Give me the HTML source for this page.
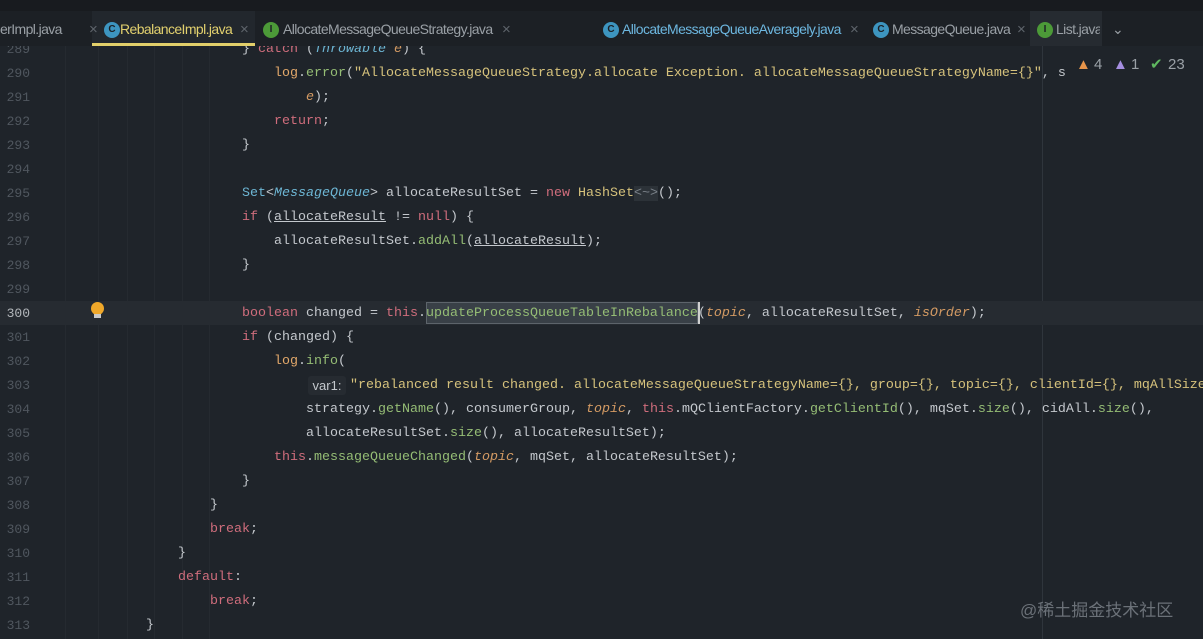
<!DOCTYPE html>
<html><head><meta charset="utf-8"><style>
body{margin:0;width:1203px;height:639px;overflow:hidden;background:#1f242a;position:relative;font-family:"Liberation Mono",monospace}
.ln{position:absolute;left:0;width:30px;text-align:right;font-size:13px;color:#50575f;height:24px;line-height:24px;margin-top:2px}
.c{position:absolute;font-size:13.33px;white-space:pre;color:#c4c8cd;height:24px;line-height:24px;margin-top:2px}
.k{color:#cf6d7c}.s{color:#d6c27c}.m{color:#95bd75}.f{color:#e2a86a}.p{color:#d39a63;font-style:italic}.t{color:#6db6d4}.ti{color:#6db6d4;font-style:italic}.g{color:#7b828a}
.guide{position:absolute;top:45px;bottom:0;width:1px;background:#252a30}
.tabs{position:absolute;left:0;top:0;width:1203px;height:46px;background:#1c2025;font-family:"Liberation Sans",sans-serif;font-size:14px;letter-spacing:-0.6px}
.tab{position:absolute;top:21px;color:#9aa0a6;white-space:nowrap}
.ic{position:absolute;top:22px;width:16px;height:16px;border-radius:50%;font-size:10px;line-height:16px;text-align:center;color:#1c2025;font-weight:bold;letter-spacing:0}
.x{position:absolute;top:21px;color:#5f656c;font-size:15px}
</style></head><body>
<div class="guide" style="left:65px"></div><div class="guide" style="left:98px"></div><div class="guide" style="left:127px"></div><div class="guide" style="left:154px"></div><div class="guide" style="left:182px"></div><div class="guide" style="left:209px"></div>
<div style="position:absolute;left:1042px;top:46px;bottom:0;width:1px;background:#2f353c"></div>
<div style="position:absolute;left:0;top:301px;width:1203px;height:24px;background:#262b31"></div>

<div class="ln" style="top:36px">289</div><div class="c" style="top:36px;left:242px">} <span class="k">catch</span> (<span class="ti">Throwable</span> <span class="p">e</span>) {</div>
<div class="ln" style="top:60px">290</div><div class="c" style="top:60px;left:274px"><span class="f">log</span>.<span class="m">error</span>(<span class="s">"AllocateMessageQueueStrategy.allocate Exception. allocateMessageQueueStrategyName={}"</span>, s</div>
<div class="ln" style="top:84px">291</div><div class="c" style="top:84px;left:306px"><span class="p">e</span>);</div>
<div class="ln" style="top:108px">292</div><div class="c" style="top:108px;left:274px"><span class="k">return</span>;</div>
<div class="ln" style="top:132px">293</div><div class="c" style="top:132px;left:242px">}</div>
<div class="ln" style="top:156px">294</div>
<div class="ln" style="top:180px">295</div><div class="c" style="top:180px;left:242px"><span class="t">Set</span>&lt;<span class="ti">MessageQueue</span>&gt; allocateResultSet = <span class="k">new</span> <span class="s">HashSet</span><span class="g" style="background:#2c3238">&lt;~&gt;</span>();</div>
<div class="ln" style="top:204px">296</div><div class="c" style="top:204px;left:242px"><span class="k">if</span> (<u>allocateResult</u> != <span class="k">null</span>) {</div>
<div class="ln" style="top:228px">297</div><div class="c" style="top:228px;left:274px">allocateResultSet.<span class="m">addAll</span>(<u>allocateResult</u>);</div>
<div class="ln" style="top:252px">298</div><div class="c" style="top:252px;left:242px">}</div>
<div class="ln" style="top:276px">299</div>
<div class="ln" style="top:300px;color:#b3b7bb">300</div>
<div style="position:absolute;left:91px;top:302px;width:13px;height:13px;border-radius:50%;background:#f0a82a"></div>
<div style="position:absolute;left:94px;top:314px;width:7px;height:4px;background:#c9c9c9"></div>
<div style="position:absolute;left:426px;top:302px;width:272px;height:22px;background:#394047;border:1px solid #5d646b;box-sizing:border-box"></div>
<div style="position:absolute;left:698px;top:302px;width:2px;height:22px;background:#d0d0d0"></div>
<div class="c" style="top:300px;left:242px"><span class="k">boolean</span> changed = <span class="k">this</span>.<span class="m">updateProcessQueueTableInRebalance</span>(<span class="p">topic</span>, allocateResultSet, <span class="p">isOrder</span>);</div>
<div class="ln" style="top:324px">301</div><div class="c" style="top:324px;left:242px"><span class="k">if</span> (changed) {</div>
<div class="ln" style="top:348px">302</div><div class="c" style="top:348px;left:274px"><span class="f">log</span>.<span class="m">info</span>(</div>
<div class="ln" style="top:372px">303</div>
<div style="position:absolute;left:308px;top:376px;width:38px;height:19px;background:#262b31;border-radius:3px;font-family:'Liberation Sans',sans-serif;font-size:13px;color:#c4c8cd;line-height:19px;text-align:center">var1:</div>
<div class="c" style="top:372px;left:350px"><span class="s">"rebalanced result changed. allocateMessageQueueStrategyName={}, group={}, topic={}, clientId={}, mqAllSize</span></div>
<div class="ln" style="top:396px">304</div><div class="c" style="top:396px;left:306px">strategy.<span class="m">getName</span>(), consumerGroup, <span class="p">topic</span>, <span class="k">this</span>.mQClientFactory.<span class="m">getClientId</span>(), mqSet.<span class="m">size</span>(), cidAll.<span class="m">size</span>(),</div>
<div class="ln" style="top:420px">305</div><div class="c" style="top:420px;left:306px">allocateResultSet.<span class="m">size</span>(), allocateResultSet);</div>
<div class="ln" style="top:444px">306</div><div class="c" style="top:444px;left:274px"><span class="k">this</span>.<span class="m">messageQueueChanged</span>(<span class="p">topic</span>, mqSet, allocateResultSet);</div>
<div class="ln" style="top:468px">307</div><div class="c" style="top:468px;left:242px">}</div>
<div class="ln" style="top:492px">308</div><div class="c" style="top:492px;left:210px">}</div>
<div class="ln" style="top:516px">309</div><div class="c" style="top:516px;left:210px"><span class="k">break</span>;</div>
<div class="ln" style="top:540px">310</div><div class="c" style="top:540px;left:178px">}</div>
<div class="ln" style="top:564px">311</div><div class="c" style="top:564px;left:178px"><span class="k">default</span>:</div>
<div class="ln" style="top:588px">312</div><div class="c" style="top:588px;left:210px"><span class="k">break</span>;</div>
<div class="ln" style="top:612px">313</div><div class="c" style="top:612px;left:146px">}</div>

<div style="position:absolute;left:1070px;top:52px;width:133px;height:26px;background:#1f242a;font-family:'Liberation Sans',sans-serif;font-size:15px;line-height:26px;color:#9aa0a6">
<span style="position:absolute;left:6px;color:#e8954a">▲</span><span style="position:absolute;left:24px">4</span>
<span style="position:absolute;left:43px;color:#a58ee0">▲</span><span style="position:absolute;left:61px">1</span>
<span style="position:absolute;left:80px;color:#5fb860">✔</span><span style="position:absolute;left:98px">23</span></div>

<div style="position:absolute;left:1020px;top:596px;font-family:'Liberation Sans','Noto Sans CJK SC',sans-serif;font-size:17px;color:#6b7178">@稀土掘金技术社区</div>

<div class="tabs">
<div style="position:absolute;left:0;top:0;width:1203px;height:11px;background:#181b1f"></div>
<div style="position:absolute;left:92px;top:11px;width:163px;height:35px;background:#22272d"></div>
<div style="position:absolute;left:92px;top:43px;width:163px;height:3px;background:#e2cf6a"></div>
<div style="position:absolute;left:1030px;top:11px;width:72px;height:35px;background:#262b31"></div>
<div class="tab" style="left:0">erImpl.java</div><div class="x" style="left:89px">×</div>
<div class="ic" style="left:104px;background:#3d95c0">C</div>
<div class="tab" style="left:120px;color:#e2d06e">RebalanceImpl.java</div><div class="x" style="left:240px">×</div>
<div class="ic" style="left:263px;background:#4c9a38">I</div>
<div class="tab" style="left:283px">AllocateMessageQueueStrategy.java</div><div class="x" style="left:502px">×</div>
<div class="ic" style="left:603px;background:#3d95c0">C</div>
<div class="tab" style="left:622px;color:#6db7e0">AllocateMessageQueueAveragely.java</div><div class="x" style="left:850px">×</div>
<div class="ic" style="left:873px;background:#3d95c0">C</div>
<div class="tab" style="left:892px">MessageQueue.java</div><div class="x" style="left:1017px">×</div>
<div class="ic" style="left:1037px;background:#4c9a38">I</div>
<div class="tab" style="left:1056px;width:44px;overflow:hidden">List.java</div>
<div class="tab" style="left:1112px;color:#9aa0a6">⌄</div>
</div>
</body></html>
